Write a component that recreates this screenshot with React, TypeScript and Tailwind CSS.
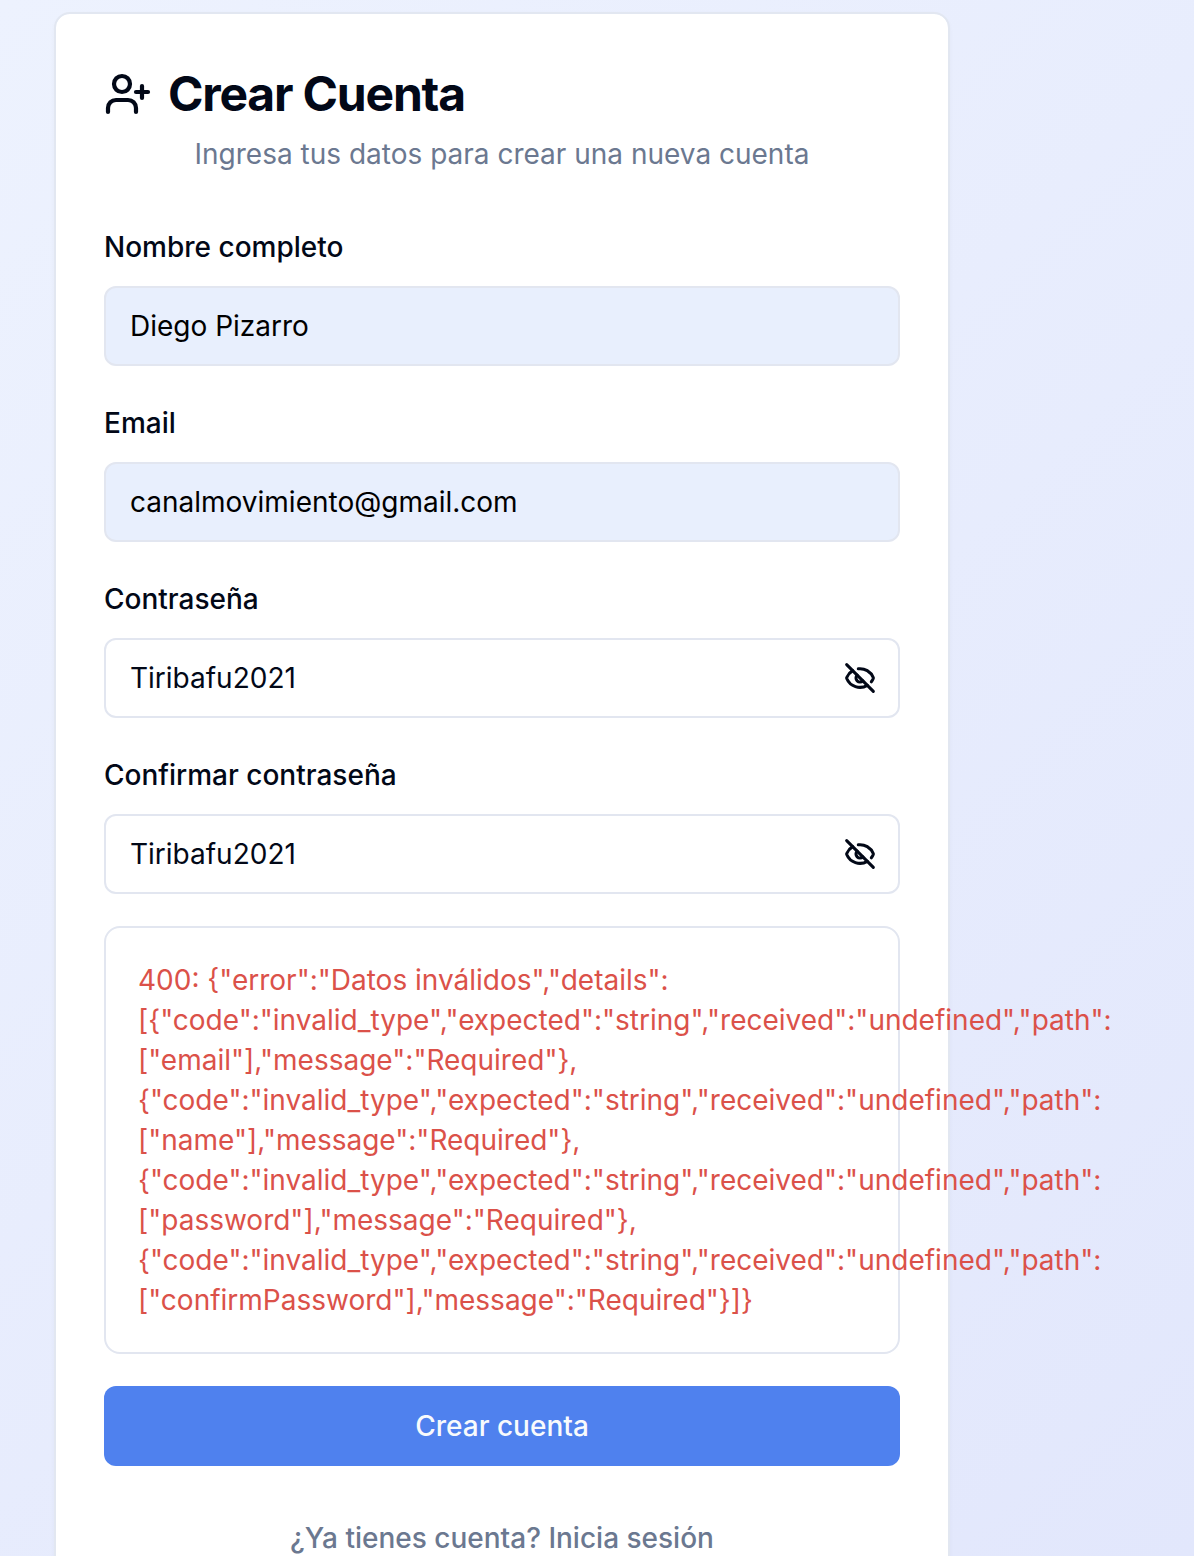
import { EyeOff, UserPlus } from "lucide-react";

const lines = [
  '400: {"error":"Datos inválidos","details":',
  '[{"code":"invalid_type","expected":"string","received":"undefined","path":',
  '["email"],"message":"Required"},',
  '{"code":"invalid_type","expected":"string","received":"undefined","path":',
  '["name"],"message":"Required"},',
  '{"code":"invalid_type","expected":"string","received":"undefined","path":',
  '["password"],"message":"Required"},',
  '{"code":"invalid_type","expected":"string","received":"undefined","path":',
  '["confirmPassword"],"message":"Required"}]}',
];

function Field({ label, value, secret = false }: { label: string; value: string; secret?: boolean }) {
  return (
    <div className="flex flex-col">
      <label className="mb-[25px] text-[28px] leading-7 font-medium">{label}</label>
      <div
        className={`flex h-20 items-center justify-between rounded-[12px] border-2 border-[#e2e6f0] pr-[22px] pl-6 text-[28px] leading-10 ${secret ? "bg-white" : "bg-[#e8effd] text-black"}`}
      >
        <span>{value}</span>
        {secret && <EyeOff size={32} strokeWidth={2.3} />}
      </div>
    </div>
  );
}

export default function App() {
  return (
    <div className="h-[1556px] overflow-hidden bg-[linear-gradient(135deg,#edf2fe,#e2e7fc)] pt-3 pl-[54px] font-['Inter',sans-serif] text-[#020817]">
      <main className="h-[1700px] w-[896px] rounded-2xl border-2 border-[#e2e7f1] bg-white bg-clip-padding px-12 pt-12 shadow-[0_2px_4px_rgba(0,0,0,0.03)]">
        <header>
          <h1 className="flex items-center gap-4 text-[48px] leading-[64px] font-bold tracking-[-1.2px]">
            <UserPlus size={48} strokeWidth={2.1} />
            Crear Cuenta
          </h1>
          <p className="mt-2 text-center text-[28px] leading-10 text-[#6b7890]">
            Ingresa tus datos para crear una nueva cuenta
          </p>
        </header>
        <form className="mt-[59px] flex flex-col gap-[43px]">
          <Field label="Nombre completo" value="Diego Pizarro" />
          <Field label="Email" value="canalmovimiento@gmail.com" />
          <Field label="Contraseña" value="Tiribafu2021" secret />
          <Field label="Confirmar contraseña" value="Tiribafu2021" secret />
        </form>
        <div className="mt-8 h-[428px] rounded-2xl border-2 border-[#e2e6f0] p-8 text-[28px] leading-10 whitespace-nowrap text-[#db5149]">
          {lines.map((line, i) => (
            <div key={i}>{line}</div>
          ))}
        </div>
        <button className="mt-8 flex h-20 w-full items-center justify-center rounded-[12px] bg-[#4f81ee] text-[28px] font-medium text-[#f8fafc]">
          Crear cuenta
        </button>
        <p className="mt-[52px] text-center text-[28px] leading-10 font-medium text-[#6b7890]">
          ¿Ya tienes cuenta? Inicia sesión
        </p>
      </main>
    </div>
  );
}
